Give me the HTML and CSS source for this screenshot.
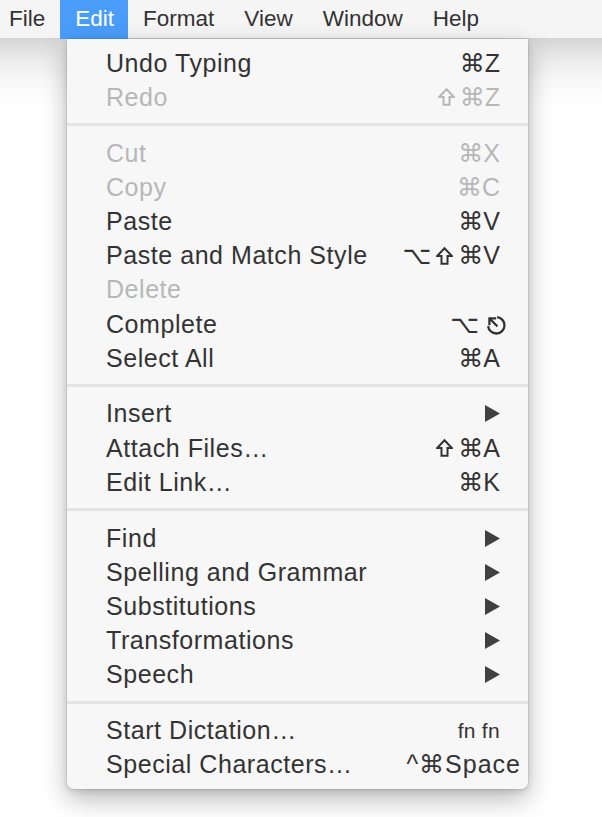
FILE: index.html
```html
<!DOCTYPE html>
<html>
<head>
<meta charset="utf-8">
<link rel="stylesheet" href="styles.css">
</head>
<body>
<div class="menubar">
  <span class="mb-item first">File</span>
  <span class="mb-item active">Edit</span>
  <span class="mb-item">Format</span>
  <span class="mb-item">View</span>
  <span class="mb-item">Window</span>
  <span class="mb-item">Help</span>
</div>
<div class="desk">
  <div class="menu">
    <div class="item"><span>Undo Typing</span><span class="key">⌘Z</span></div>
    <div class="item off"><span>Redo</span><span class="key"><svg class="shift" viewBox="0 0 17 18" width="17" height="18"><polygon points="8.5,1.2 15.8,9 11.5,9 11.5,16.8 5.5,16.8 5.5,9 1.2,9" fill="none" stroke="currentColor" stroke-width="2" stroke-linejoin="miter"/></svg>⌘Z</span></div>
    <div class="sep"></div>
    <div class="item off"><span>Cut</span><span class="key">⌘X</span></div>
    <div class="item off"><span>Copy</span><span class="key">⌘C</span></div>
    <div class="item"><span>Paste</span><span class="key">⌘V</span></div>
    <div class="item"><span>Paste and Match Style</span><span class="key">⌥<svg class="shift" viewBox="0 0 17 18" width="17" height="18"><polygon points="8.5,1.2 15.8,9 11.5,9 11.5,16.8 5.5,16.8 5.5,9 1.2,9" fill="none" stroke="currentColor" stroke-width="2" stroke-linejoin="miter"/></svg>⌘V</span></div>
    <div class="item off"><span>Delete</span><span class="key"></span></div>
    <div class="item"><span>Complete</span><span class="key esc-key">⌥<svg class="esc" viewBox="0 0 20 20" width="21" height="21"><path d="M11.5 3 A7.8 7.8 0 1 1 3 11.5" fill="none" stroke="currentColor" stroke-width="2.2"/><path d="M11 11 L5 5 M4.2 4.2 L4.2 9.5 M4.2 4.2 L9.5 4.2" fill="none" stroke="currentColor" stroke-width="2.2" stroke-linecap="square"/></svg></span></div>
    <div class="item"><span>Select All</span><span class="key">⌘A</span></div>
    <div class="sep"></div>
    <div class="item"><span>Insert</span><span class="key"><svg class="arrow" viewBox="0 0 15 17" width="15" height="17"><polygon points="0,0 15,8.5 0,17" fill="#404040"/></svg></span></div>
    <div class="item"><span>Attach Files…</span><span class="key"><svg class="shift" viewBox="0 0 17 18" width="17" height="18"><polygon points="8.5,1.2 15.8,9 11.5,9 11.5,16.8 5.5,16.8 5.5,9 1.2,9" fill="none" stroke="currentColor" stroke-width="2" stroke-linejoin="miter"/></svg>⌘A</span></div>
    <div class="item"><span>Edit Link…</span><span class="key">⌘K</span></div>
    <div class="sep"></div>
    <div class="item"><span>Find</span><span class="key"><svg class="arrow" viewBox="0 0 15 17" width="15" height="17"><polygon points="0,0 15,8.5 0,17" fill="#404040"/></svg></span></div>
    <div class="item"><span>Spelling and Grammar</span><span class="key"><svg class="arrow" viewBox="0 0 15 17" width="15" height="17"><polygon points="0,0 15,8.5 0,17" fill="#404040"/></svg></span></div>
    <div class="item"><span>Substitutions</span><span class="key"><svg class="arrow" viewBox="0 0 15 17" width="15" height="17"><polygon points="0,0 15,8.5 0,17" fill="#404040"/></svg></span></div>
    <div class="item"><span>Transformations</span><span class="key"><svg class="arrow" viewBox="0 0 15 17" width="15" height="17"><polygon points="0,0 15,8.5 0,17" fill="#404040"/></svg></span></div>
    <div class="item"><span>Speech</span><span class="key"><svg class="arrow" viewBox="0 0 15 17" width="15" height="17"><polygon points="0,0 15,8.5 0,17" fill="#404040"/></svg></span></div>
    <div class="sep"></div>
    <div class="item"><span>Start Dictation…</span><span class="key fn">fn fn</span></div>
    <div class="item"><span>Special Characters…</span><span class="key wide">^⌘Space</span></div>
  </div>
</div>
</body>
</html>
```
FILE: styles.css
```css
html, body {
  margin: 0;
  padding: 0;
  background: #ffffff;
  height: 100%;
  overflow: hidden;
}
body {
  font-family: "Liberation Sans", "DejaVu Sans", sans-serif;
  font-size: 22.5px;
  color: #333333;
}
.menubar {
  display: flex;
  height: 39px;
  background: #f5f5f5;
  box-sizing: border-box;
  border-bottom: 1px solid #d2d2d2;
}
.mb-item {
  padding: 0 15px;
  line-height: 38px;
  height: 39px;
  color: #333333;
}
.mb-item.first {
  padding-left: 9px;
}
.mb-item.active {
  padding: 0 14px 0 15px;
  background: #4a9cf9;
  color: #ffffff;
}
.desk {
  position: relative;
  height: 778px;
  background: linear-gradient(#d6d6d6 0px, #ececec 22px, #f8f8f8 42px, #ffffff 65px);
}
.menu {
  position: absolute;
  left: 67px;
  top: 0;
  width: 461px;
  box-sizing: border-box;
  padding: 7px 0;
  background: #f7f7f7;
  border-radius: 0 0 7px 7px;
  box-shadow: 0 0 0 1px rgba(0, 0, 0, 0.06), 0 10px 26px rgba(0, 0, 0, 0.28), 0 2px 6px rgba(0, 0, 0, 0.12);
}
.item {
  display: flex;
  justify-content: space-between;
  align-items: center;
  height: 34.2px;
  padding: 0 28px 0 39px;
  color: #333333;
  white-space: nowrap;
  font-size: 25px;
  letter-spacing: 0.55px;
}
.item.off {
  color: #b7b7b7;
}
.key {
  display: flex;
  align-items: center;
  gap: 5px;
  letter-spacing: 0;
}
.shift {
  display: block;
}
.esc-key {
  margin-right: -6px;
  gap: 6px;
}
.esc {
  display: block;
}
.arrow {
  display: block;
}
.fn {
  font-size: 21px;
  letter-spacing: 0.3px;
}
.wide {
  margin-right: -21px;
  letter-spacing: 1px;
}
.sep {
  height: 3px;
  background: #e4e4e4;
  margin: 9px 0 9.6px;
}
```
